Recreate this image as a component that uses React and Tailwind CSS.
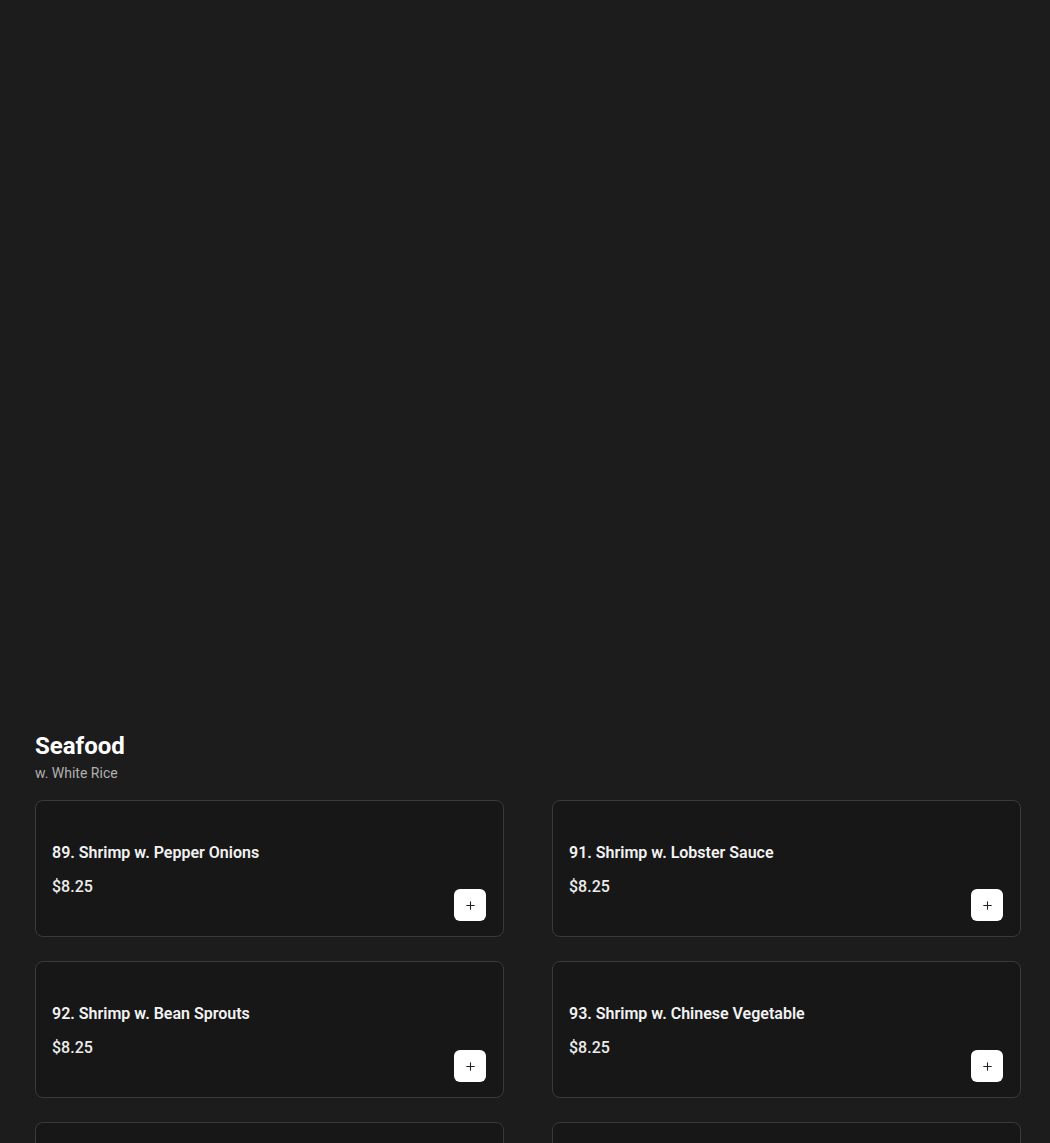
import React from "react";
import { Plus } from "lucide-react";

const ITEMS = [
  { n: 89, name: "Shrimp w. Pepper Onions", price: "$8.25" },
  { n: 91, name: "Shrimp w. Lobster Sauce", price: "$8.25" },
  { n: 92, name: "Shrimp w. Bean Sprouts", price: "$8.25" },
  { n: 93, name: "Shrimp w. Chinese Vegetable", price: "$8.25" },
  { n: 94, name: "Shrimp w. Broccoli", price: "$8.25" },
  { n: 95, name: "Shrimp w. Garlic Sauce", price: "$8.25" },
];

const ItemCard = ({ item }) => (
  <div className="relative h-[137px] rounded-lg border border-[#3a3a3a] bg-[#171717] px-4 pt-[40px]">
    <h3 className="text-base leading-6 font-semibold text-[#f2f2f2]">
      {item.n}. {item.name}
    </h3>
    <p className="mt-[10px] text-base leading-6 font-medium text-[#ececec]">{item.price}</p>
    <button className="absolute right-[17px] bottom-[15px] w-8 h-8 rounded-md bg-white flex items-center justify-center">
      <Plus size={13} strokeWidth={2} className="text-[#222]" />
    </button>
  </div>
);

export default function App() {
  return (
    <div className="h-[1143px] bg-[#1c1c1c] font-['Roboto',sans-serif] pl-[35px] pt-[730px] overflow-hidden">
      {/* Section heading */}
      <div className="mb-[17px]">
        <h2 className="text-2xl leading-8 font-bold text-white">Seafood</h2>
        <p className="mt-[1px] text-sm leading-5 text-[#b0b0b0]">w. White Rice</p>
      </div>

      {/* Items */}
      <div className="w-[986px] grid grid-cols-2 gap-x-[48px] gap-y-[24px]">
        {ITEMS.map((item) => (
          <ItemCard key={item.n} item={item} />
        ))}
      </div>
    </div>
  );
}
